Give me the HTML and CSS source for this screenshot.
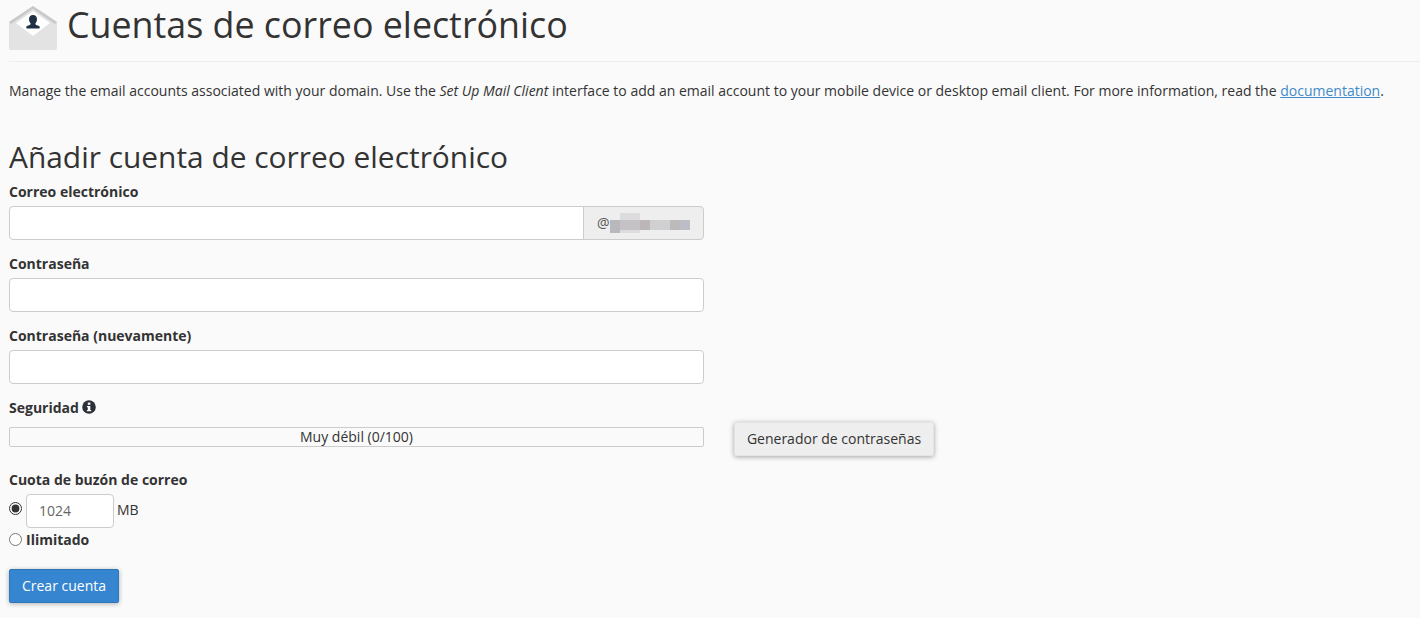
FILE: index.html
```html
<!DOCTYPE html>
<html lang="en">
<head>
    <meta charset="UTF-8">
    <meta name="viewport" content="width=device-width, initial-scale=1.0">
    <title>Cuentas de correo electrónico</title>
    <link rel="stylesheet" href="styles.css">
</head>
<body>
    <div class="page-header">
        <svg class="page-icon" width="48" height="44" viewBox="0 0 48 44">
            <path d="M0 16 L24 0 L48 16 V42 a2 2 0 0 1 -2 2 H2 a2 2 0 0 1 -2 -2 Z" fill="#e3e3e3"/>
            <path d="M0 16 L24 0 L48 16 L46 18 L24 3 L2 18 Z" fill="#c9c9c9"/>
            <path d="M7 17 L24 5 L41 17 L24 30 Z" fill="#ffffff"/>
            <path d="M24 9 c2.6 0 4 2 4 4.2 c0 2 -1 3.4 -1.6 4.2 c0 1 0.4 1.4 1.6 1.8 l2.6 1 v2.2 H17.4 v-2.2 l2.6 -1 c1.2 -0.4 1.6 -0.8 1.6 -1.8 c-0.6 -0.8 -1.6 -2.2 -1.6 -4.2 c0 -2.2 1.4 -4.2 4 -4.2 Z" fill="#1f3044"/>
        </svg>
        <h1>Cuentas de correo electrónico</h1>
    </div>

    <p class="description">Manage the email accounts associated with your domain. Use the <em>Set Up Mail Client</em> interface to add an email account to your mobile device or desktop email client. For more information, read the <a href="#">documentation</a>.</p>

    <h2>Añadir cuenta de correo electrónico</h2>

    <form id="addAccount">
        <div class="form-row">
            <div class="field">
                <label for="email">Correo electrónico</label>
                <div class="input-group">
                    <input type="text" id="email" name="email">
                    <div class="addon">@<span class="blur"><i class="b1"></i><i class="b2"></i><i class="b3"></i><i class="b4"></i><i class="b5"></i><i class="b6"></i></span></div>
                </div>
            </div>
        </div>
        <div class="form-row">
            <div class="field">
                <label for="password">Contraseña</label>
                <input type="text" id="password" name="password">
            </div>
        </div>
        <div class="form-row">
            <div class="field">
                <label for="password2">Contraseña (nuevamente)</label>
                <input type="text" id="password2" name="password2">
            </div>
        </div>
        <div class="form-row strength-row">
            <div class="field">
                <label>Seguridad <svg class="info-icon" width="14" height="14" viewBox="0 0 14 14">
                        <circle cx="7" cy="7" r="6.8" fill="#2b3138"/>
                        <rect x="5.8" y="2.6" width="2.6" height="2.2" fill="#fff"/>
                        <path d="M4.9 5.9 H8.3 V9.9 H9.2 V11.3 H4.9 V9.9 H5.8 V7.3 H4.9 Z" fill="#fff"/>
                    </svg></label>
                <div class="strength-bar">Muy débil (0/100)</div>
            </div>
            <button type="button" class="btn-generator">Generador de contraseñas</button>
        </div>
        <div class="quota">
            <label class="quota-title">Cuota de buzón de correo</label>
            <div class="quota-line">
                <input type="radio" name="quota" checked>
                <input type="text" class="quota-input" value="1024">
                <span>MB</span>
            </div>
            <div class="quota-line unlimited">
                <input type="radio" name="quota">
                <b>Ilimitado</b>
            </div>
        </div>
        <button type="button" class="btn-primary">Crear cuenta</button>
    </form>
</body>
</html>
```

FILE: styles.css
```css
body {
    font-family: "Open Sans", sans-serif;
    font-size: 14px;
    line-height: 20px;
    color: #333;
    background-color: #fafafa;
    margin: 0;
    padding: 0 9px;
    height: 618px;
    overflow: hidden;
    box-sizing: border-box;
}
.page-header {
    display: flex;
    align-items: flex-start;
    height: 61px;
    margin: 0 -9px 0 0;
    border-bottom: 1px solid #eee;
}
.page-icon {
    margin-top: 6px;
    flex-shrink: 0;
}
h1 {
    font-size: 35.8px;
    font-weight: 400;
    line-height: 48px;
    margin: 0 0 0 10px;
    color: #333;
}
.description {
    margin: 19px 0 0;
}
a {
    color: #428bca;
}
h2 {
    font-size: 29.9px;
    font-weight: 400;
    line-height: 36px;
    margin: 38px 0 0;
}
label {
    font-weight: 700;
    display: block;
    line-height: 20px;
    margin-bottom: 4px;
}
.form-row {
    width: 695px;
    margin-bottom: 14px;
}
form {
    margin-top: 7px;
}
.field {
    width: 695px;
    flex-shrink: 0;
}
input[type="text"] {
    width: 100%;
    height: 34px;
    padding: 5px 12px 7px;
    border: 1px solid #ccc;
    border-radius: 4px;
    background-color: #fff;
    box-sizing: border-box;
    font-family: inherit;
    font-size: 14px;
    color: #666;
    display: block;
}
.input-group {
    display: flex;
}
.input-group input[type="text"] {
    flex: 1;
    width: auto;
    min-width: 0;
    border-radius: 4px 0 0 4px;
}
.addon {
    width: 121px;
    height: 34px;
    box-sizing: border-box;
    border: 1px solid #ccc;
    border-radius: 0 4px 4px 0;
    background-color: #eee;
    color: #555;
    padding: 0 13px;
    margin-left: -1px;
    display: flex;
    align-items: center;
}
.blur {
    display: flex;
    align-items: flex-end;
    height: 20px;
}
.blur i {
    display: block;
    height: 10px;
    margin-bottom: 3px;
}
.blur .b1 { background-color: #b9b8bd; width: 10px; height: 13px; margin-bottom: 0; }
.blur .b2 { background: linear-gradient(#dddcdd 7px, #c4c2c5 7px, #c4c2c5 17px, #dddcdd 17px); width: 20px; height: 20px; margin-bottom: 0; }
.blur .b3 { background-color: #bdb6b8; width: 10px; }
.blur .b4 { background-color: #d0d0d2; width: 20px; }
.blur .b5 { background-color: #bfbaba; width: 10px; }
.blur .b6 { background-color: #bcbdc6; width: 10px; }
.strength-row {
    display: flex;
    align-items: flex-start;
    width: auto;
    margin-bottom: 0;
}
.info-icon {
    vertical-align: -1px;
    margin-left: -1px;
}
.strength-bar {
    height: 20px;
    line-height: 18px;
    margin-top: 9px;
    border: 1px solid #ccc;
    border-radius: 2px;
    box-sizing: border-box;
    text-align: center;
    background-color: #fafafa;
}
.btn-generator {
    margin: 24px 0 0 30px;
    width: 200px;
    height: 34px;
    padding: 0 0 2px;
    border: 1px solid #e4e4e4;
    border-radius: 2px;
    background-color: #eee;
    color: #333;
    font-family: inherit;
    font-size: 14px;
    box-shadow: 0 1px 5px rgba(0, 0, 0, 0.35);
}
.quota {
    margin-top: 14px;
}
.quota-title {
    margin-bottom: 4px;
}
.quota-line {
    display: flex;
    align-items: flex-start;
}
input[type="radio"] {
    width: 13px;
    height: 13px;
    margin: 8px 4px 0 0;
    flex-shrink: 0;
    accent-color: #333;
}
.quota-input[type="text"] {
    width: 88px;
    margin-right: 3px;
}
.quota-line span {
    line-height: 32px;
}
.unlimited {
    line-height: 20px;
    margin-top: 2px;
}
.unlimited input[type="radio"] {
    margin-top: 3px;
}
.btn-primary {
    display: block;
    margin-top: 19px;
    width: 110px;
    height: 34px;
    padding: 0 0 2px;
    border: 1px solid #2e76b6;
    border-radius: 2px;
    background-color: #3585d0;
    color: #fff;
    font-family: inherit;
    font-size: 14px;
    box-shadow: 0 1px 5px rgba(0, 0, 0, 0.3);
}
```
